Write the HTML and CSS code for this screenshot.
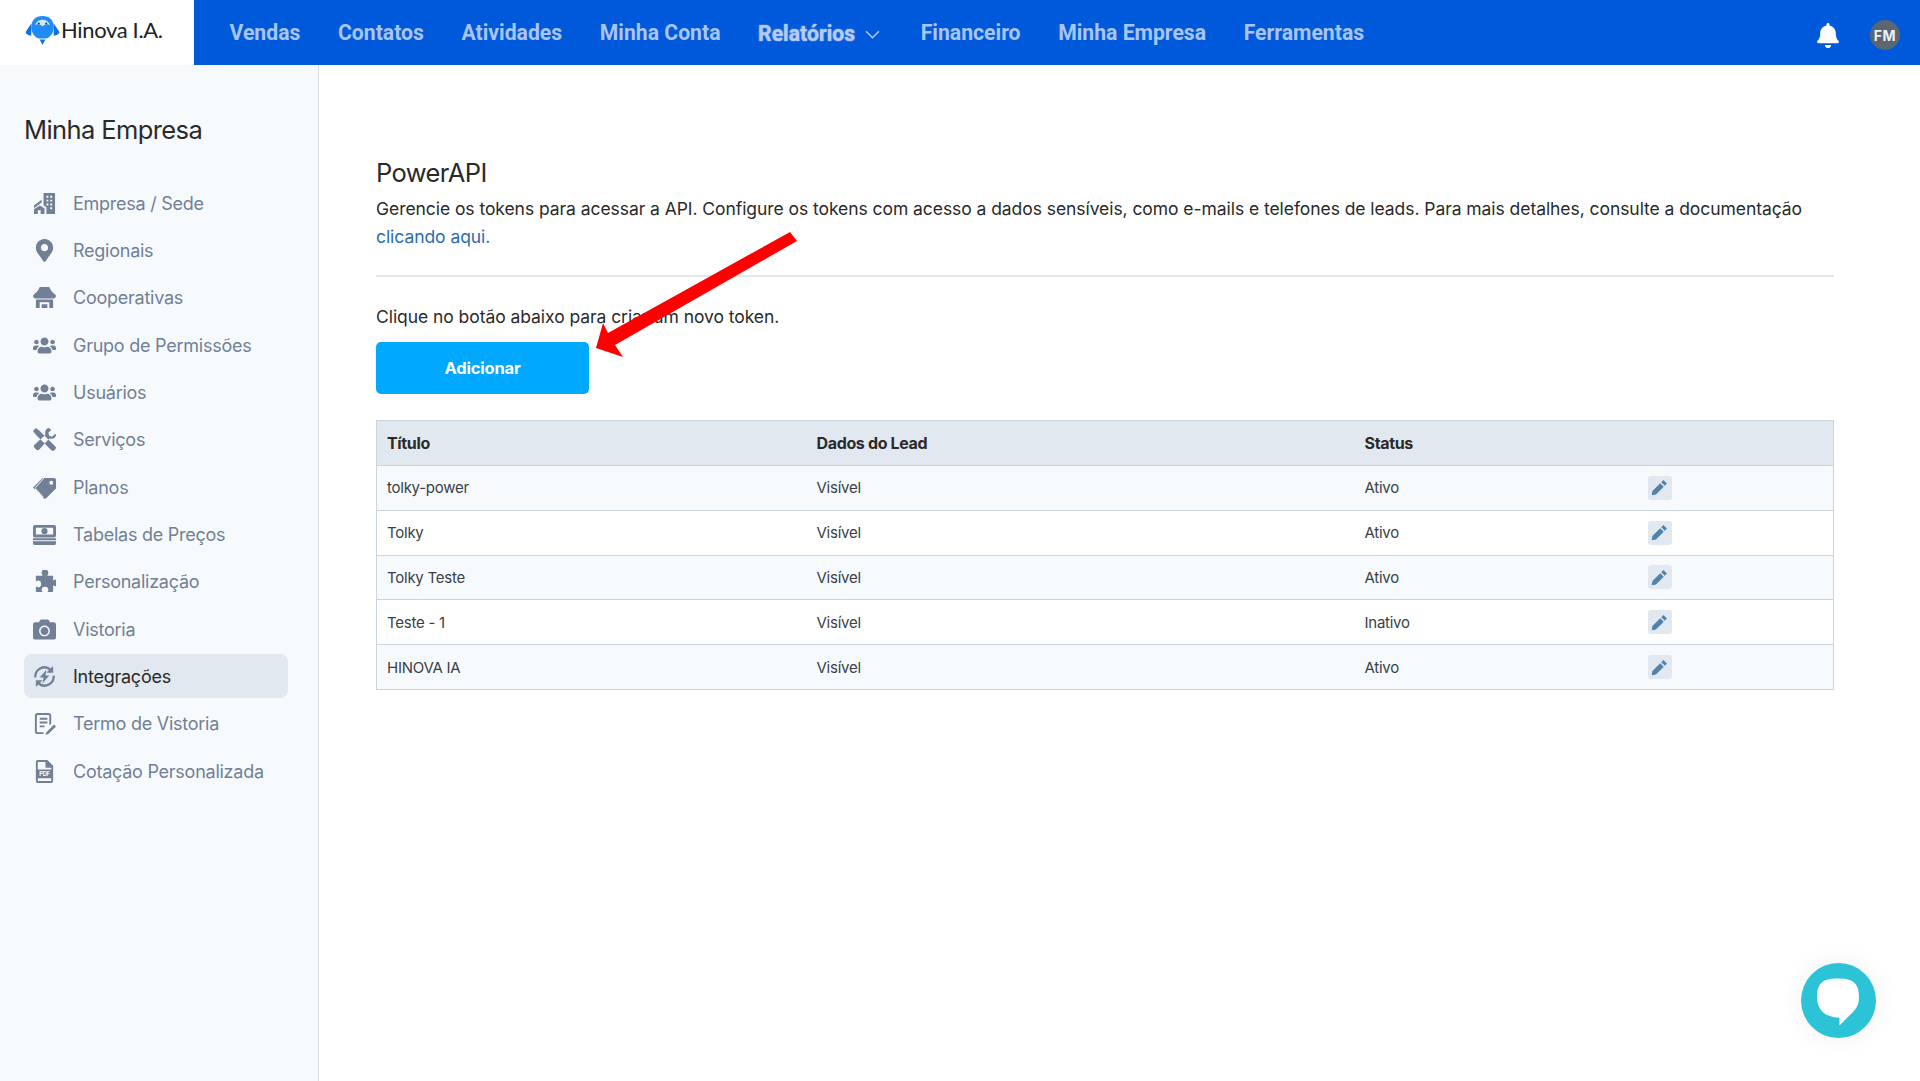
FILE: index.html
```html
<!DOCTYPE html>
<html lang="pt-BR">
<head>
<meta charset="utf-8">
<title>PowerAPI</title>
<link rel="stylesheet" href="styles.css">
</head>
<body>
<svg class="defs" width="0" height="0" aria-hidden="true">
  <symbol id="i-users" viewBox="0 0 640 512"><path d="M96 224c35.3 0 64-28.7 64-64s-28.7-64-64-64-64 28.7-64 64 28.7 64 64 64zm448 0c35.3 0 64-28.7 64-64s-28.7-64-64-64-64 28.7-64 64 28.7 64 64 64zm32 32h-64c-17.6 0-33.5 7.1-45.1 18.6 40.3 22.1 68.9 62 75.1 109.4h66c17.7 0 32-14.3 32-32v-32c0-35.3-28.7-64-64-64zm-256 0c61.9 0 112-50.1 112-112S381.9 32 320 32 208 82.1 208 144s50.1 112 112 112zm76.8 32h-8.3c-20.8 10-43.9 16-68.5 16s-47.6-6-68.5-16h-8.3C179.6 288 128 339.6 128 403.2V432c0 26.5 21.5 48 48 48h288c26.5 0 48-21.5 48-48v-28.8c0-63.6-51.6-115.2-115.2-115.2zm-223.7-13.4C161.5 263.1 145.6 256 128 256H64c-35.3 0-64 28.7-64 64v32c0 17.7 14.3 32 32 32h65.9c6.3-47.4 34.9-87.3 75.2-109.4z"/></symbol>
  <symbol id="i-pencil" viewBox="0 0 24 24"><path d="M17.500 1.500l5 5-3 3-5-5zM13 6l5 5L7 22l-6 1 1-6z"/></symbol>
</svg>

<header class="topbar">
  <a class="brand">
    <svg class="brand-mark" viewBox="0 0 36 32" aria-hidden="true">
      <path d="M6 9 L0 18 Q0 21 6 22 Z" fill="#0f6fe6"/>
      <path d="M30 9 L36 18 Q36 21 30 22 Z" fill="#0f6fe6"/>
      <path d="M18 1C10 1 6 6 6 13c0 6 4 11 8 12h8c4-1 8-6 8-12 0-7-4-12-12-12z" fill="#1f8cf5"/>
      <path d="M10 11c1-4 4-6 8-6s7 2 8 6c-3-2-5-1-8 1-3-2-5-3-8-1z" fill="#cfe6fb"/>
      <circle cx="14" cy="9" r="1" fill="#123"/><circle cx="22" cy="9" r="1" fill="#123"/>
      <path d="M15 26h6l-3 6z" fill="#0f6fe6"/>
    </svg>
    <span class="brand-name">Hinova I.A.</span>
  </a>
  <nav class="mainnav">
    <a>Vendas</a><a>Contatos</a><a>Atividades</a><a>Minha Conta</a>
    <a class="active">Relatórios
      <svg class="chev" viewBox="0 0 14 8" aria-hidden="true"><path d="M1 1l6 6 6-6" fill="none" stroke="currentColor" stroke-width="1.4"/></svg>
    </a>
    <a>Financeiro</a><a>Minha Empresa</a><a>Ferramentas</a>
  </nav>
  <div class="top-actions">
    <svg class="bell" viewBox="0 0 448 512" aria-hidden="true"><path d="M224 512c35.32 0 63.97-28.65 63.97-64H160.03c0 35.35 28.65 64 63.97 64zm215.39-149.71c-19.32-20.76-55.47-51.99-55.47-154.29 0-77.7-54.48-139.9-127.94-155.16V32c0-17.67-14.32-32-31.98-32s-31.98 14.33-31.98 32v20.84C118.56 68.1 64.08 130.3 64.08 208c0 102.3-36.15 133.53-55.47 154.29-6 6.45-8.66 14.16-8.61 21.71.11 16.4 12.98 32 32.1 32h383.8c19.12 0 32-15.6 32.1-32 .05-7.55-2.61-15.27-8.61-21.71z"/></svg>
    <span class="avatar">FM</span>
  </div>
</header>

<div class="shell">
  <aside class="sidebar">
    <h2 class="side-title">Minha Empresa</h2>
    <ul class="side-list">
      <li class="side-item"><svg class="ico" viewBox="0 0 24 24"><path d="M11 1h12v22H14v-7l-3-2zM14 4v2h2V4zm4 0v2h2V4zm-4 4v2h2V8zm4 0v2h2V8zm-4 4v2h2v-2zm4 0v2h2v-2zm0 4v2h2v-2zM1 14l8-6v3l-8 6zM1 18l6-4 5 3v6H8v-4H5v4H1z" fill-rule="evenodd"/></svg>Empresa / Sede</li>
      <li class="side-item"><svg class="ico" viewBox="0 0 384 512"><path d="M172.268 501.67C26.97 291.031 0 269.413 0 192 0 85.961 85.961 0 192 0s192 85.961 192 192c0 77.413-26.97 99.031-172.268 309.67-9.535 13.774-29.93 13.773-39.464 0zM192 272c44.183 0 80-35.817 80-80s-35.817-80-80-80-80 35.817-80 80 35.817 80 80 80z"/></svg>Regionais</li>
      <li class="side-item"><svg class="ico" viewBox="0 0 24 24"><path d="M7 1h10l2 4 5 5c0 2-1 3-3 3H3c-2 0-3-1-3-3l5-5zM3 14h18v9h-4v-6H7v6H3zM9 19h6v4H9z"/></svg>Cooperativas</li>
      <li class="side-item"><svg class="ico" viewBox="0 0 640 512"><use href="#i-users"/></svg>Grupo de Permissões</li>
      <li class="side-item"><svg class="ico" viewBox="0 0 640 512"><use href="#i-users"/></svg>Usuários</li>
      <li class="side-item"><svg class="ico" viewBox="0 0 24 24"><path d="M3 0l4 3 14 14 3 3c0 2-2 4-4 4l-3-3L3 7 0 3zM17 0c-3 0-5 3-4 7L1 18c-1 2 3 6 5 5L17 11c4 1 7-1 7-4l-1-1-3 3-3-1-1-3 3-3z"/></svg>Serviços</li>
      <li class="side-item"><svg class="ico" viewBox="0 0 24 22"><path d="M12 1h10a2 2 0 0 1 2 2v9L14 22a2 2 0 0 1-3 0l-8-8a2 2 0 0 1 0-3zm7 3a2 2 0 1 0 0 4 2 2 0 0 0 0-4zM0 11L10 1h1L2 11l9 10-1 0z" fill-rule="evenodd"/></svg>Planos</li>
      <li class="side-item"><svg class="ico" viewBox="0 0 24 22"><path d="M2 1h20a2 2 0 0 1 2 2v9a2 2 0 0 1-2 2H2a2 2 0 0 1-2-2V3a2 2 0 0 1 2-2zm1 3v7h18V4zM0 15h24v2H0zm0 3h24v2a2 2 0 0 1-2 2H2a2 2 0 0 1-2-2z" fill-rule="evenodd"/><circle cx="12" cy="7.500" r="3.200"/></svg>Tabelas de Preços</li>
      <li class="side-item"><svg class="ico" viewBox="0 0 24 24"><path d="M9 3a3.500 3.500 0 0 1 7 0c0 1-1 2-1 3h6v5c1 0 1-1 2-1a3.500 3.500 0 0 1 0 7c-1 0-1-1-2-1v6a1 1 0 0 1-1 1h-5c0-1 1-1 1-2a3.500 3.500 0 0 0-7 0c0 1 1 1 1 2H4a1 1 0 0 1-1-1v-5c1 0 1 1 2 1a3.500 3.500 0 0 0 0-7c-1 0-1 1-2 1V6h7c0-1-1-2-1-3z"/></svg>Personalização</li>
      <li class="side-item"><svg class="ico" viewBox="0 0 512 512"><path d="M512 144v288c0 26.500-21.500 48-48 48H48c-26.500 0-48-21.500-48-48V144c0-26.500 21.500-48 48-48h88l12.300-32.900c7-18.700 24.900-31.100 45-31.100h125.500c20 0 37.900 12.400 44.900 31.100L376 96h88c26.500 0 48 21.500 48 48zM376 288c0-66.200-53.800-120-120-120s-120 53.800-120 120 53.800 120 120 120 120-53.800 120-120zm-32 0c0 48.500-39.500 88-88 88s-88-39.500-88-88 39.500-88 88-88 88 39.500 88 88z"/></svg>Vistoria</li>
      <li class="side-item is-current"><svg class="ico" viewBox="0 0 24 24"><path class="arc" d="M2.500 13A9.500 9.500 0 0 1 18 4.700M21.500 11A9.500 9.500 0 0 1 6 19.300"/><path d="M21 1v7h-7zM3 23v-7h7zM14 5l-7 8h4l-1 6 7-8h-4z"/></svg>Integrações</li>
      <li class="side-item"><svg class="ico" viewBox="0 0 24 24"><path d="M5 1h11a3 3 0 0 1 3 3v8l-2 2V4a1 1 0 0 0-1-1H5a1 1 0 0 0-1 1v16a1 1 0 0 0 1 1h6v2H5a3 3 0 0 1-3-3V4a3 3 0 0 1 3-3zm2 5h8v2H7zm0 4h8v2H7zm0 4h5v2H7zm15-1l2 2-8 8-3 1 1-3z"/></svg>Termo de Vistoria</li>
      <li class="side-item"><svg class="ico" viewBox="0 0 24 24"><path d="M5 0h10l6 6v16a2 2 0 0 1-2 2H5a2 2 0 0 1-2-2V2a2 2 0 0 1 2-2zm0 2v8h14V8h-6V2zm0 17v3h14v-3z" fill-rule="evenodd"/><text class="pdf" x="12" y="16.700" text-anchor="middle">PDF</text></svg>Cotação Personalizada</li>
    </ul>
  </aside>

  <main class="content">
    <h1 class="page-title">PowerAPI</h1>
    <p class="lead">Gerencie os tokens para acessar a API. Configure os tokens com acesso a dados sensíveis, como e-mails e telefones de leads. Para mais detalhes, consulte a documentação <a class="link">clicando aqui.</a></p>
    <hr class="rule">
    <p class="hint">Clique no botão abaixo para criar um novo token.</p>
    <button class="btn-add" type="button">Adicionar</button>
    <table class="tokens">
      <thead>
        <tr><th class="col-a">Título</th><th class="col-b">Dados do Lead</th><th class="col-c">Status</th><th></th></tr>
      </thead>
      <tbody>
        <tr><td>tolky-power</td><td>Visível</td><td>Ativo</td><td><span class="edit"><svg viewBox="0 0 24 24"><use href="#i-pencil"/></svg></span></td></tr>
        <tr><td>Tolky</td><td>Visível</td><td>Ativo</td><td><span class="edit"><svg viewBox="0 0 24 24"><use href="#i-pencil"/></svg></span></td></tr>
        <tr><td>Tolky Teste</td><td>Visível</td><td>Ativo</td><td><span class="edit"><svg viewBox="0 0 24 24"><use href="#i-pencil"/></svg></span></td></tr>
        <tr><td>Teste - 1</td><td>Visível</td><td>Inativo</td><td><span class="edit"><svg viewBox="0 0 24 24"><use href="#i-pencil"/></svg></span></td></tr>
        <tr><td>HINOVA IA</td><td>Visível</td><td>Ativo</td><td><span class="edit"><svg viewBox="0 0 24 24"><use href="#i-pencil"/></svg></span></td></tr>
      </tbody>
    </table>
  </main>
</div>

<svg class="arrow" viewBox="0 0 204 130" aria-hidden="true"><path d="M195 2L202 11 20 115 28 127 1 118 8 93 13 103Z"/></svg>

<div class="chat">
  <svg viewBox="0 0 44 48" aria-hidden="true"><path d="M21 0c14 0 22 3 22 19 0 9-4 14-10 19L23 48v-8C8 40 0 32 0 19 0 3 8 0 21 0z"/></svg>
</div>
</body>
</html>
```
FILE: styles.css
```css
* { box-sizing: border-box; }
html, body { margin: 0; height: 100%; }
body { font-family: Inter, "Liberation Sans", sans-serif; color: #2a2a2a; background: #fff; overflow: hidden; }
.defs { position: absolute; }

.topbar { display: flex; align-items: center; height: 65px; background: #0058db; }
.brand { display: flex; align-items: center; gap: 0; width: 194px; height: 65px; padding: 0 0 6px 24px; background: #fff; }
.brand-mark { width: 37px; height: 30px; }
.brand-name { font-family: Lato, sans-serif; font-size: 22px; color: #222; letter-spacing: -.35px; }
.mainnav { display: flex; align-items: center; gap: 37.600px; margin-left: 35.500px; padding-bottom: 1px; font-family: Roboto, sans-serif; font-weight: 700; font-size: 21.200px; color: #a9c5f3; }
.mainnav a { display: flex; align-items: center; gap: 10px; white-space: nowrap; }
.mainnav .active { color: #b4ccf5; text-shadow: 0 0 1.500px #b4ccf5; padding-top: 2px; }
.chev { width: 15px; height: 9px; margin: 2px 3px 0 0; }
.top-actions { display: flex; align-items: center; gap: 31px; margin-left: auto; padding-right: 20px; }
.bell { width: 22px; height: 25px; fill: #fff; margin-top: 5px; }
.avatar { display: flex; align-items: center; justify-content: center; width: 30px; height: 30px; border-radius: 50%; background: #5a6672; color: #eef1f4; font-size: 14px; font-weight: 700; margin-top: 5px; letter-spacing: .6px; }

.shell { display: flex; height: 1016px; }
.sidebar { width: 319px; flex: none; padding: 48px 30px 0 24px; background: #f7fafc; border-right: 1px solid #d5dde5; }
.side-title { margin: 0 0 34px; font-size: 25.500px; line-height: 34px; font-weight: 400; color: #2a2a2a; letter-spacing: -.6px; }
.side-list { display: flex; flex-direction: column; gap: 3.350px; margin: 0; padding: 0; list-style: none; }
.side-item { display: flex; align-items: center; gap: 17px; height: 44px; padding: 0 9px; border-radius: 8px; font-size: 18px; color: #718096; white-space: nowrap; letter-spacing: -.25px; }
.side-item .ico { width: 23px; height: 23px; flex: none; fill: #718096; }
.is-current { background: #e2e8f0; color: #2a2a2a; }
.arc { fill: none; stroke: #718096; stroke-width: 2.400; }
.pdf { font-size: 6px; font-weight: 700; fill: #f7fafc; }

.content { flex: 1; padding: 91px 86px 0 57px; }
.page-title { margin: 0; font-size: 25.500px; line-height: 34px; font-weight: 400; color: #2a2a2a; letter-spacing: -.6px; }
.lead { margin: 4.500px 0 0; font-size: 17.500px; line-height: 28px; color: #2a2a2a; letter-spacing: -.06px; }
.link { color: #2b6cb0; }
.rule { margin: 24px 0 0; border: 0; border-top: 2px solid #e2e8f0; }
.hint { margin: 26px 0 0; font-size: 17.500px; line-height: 28px; letter-spacing: -.06px; }
.btn-add { display: block; width: 213px; height: 52px; margin-top: 11.500px; border: 0; border-radius: 5px; background: #00a8ff; color: #fff; font-family: inherit; font-size: 16.500px; font-weight: 700; letter-spacing: -.2px; }

.tokens { width: 100%; margin-top: 26px; border-collapse: collapse; table-layout: fixed; font-size: 15px; border: 1px solid #cbd5e0; }
.tokens th { height: 45px; padding: 0 10px; text-align: left; font-weight: 700; background: #e2e8f0; font-size: 16px; border-bottom: 1px solid #cbd5e0; letter-spacing: -.35px; }
.tokens td { height: 44.800px; padding: 0 10px; border-bottom: 1px solid #cbd5e0; letter-spacing: -.25px; color: #3a3f47; }
.tokens tbody tr:nth-child(odd) { background: #f7fafc; }
.col-a { width: 430px; }
.col-b { width: 548px; }
.col-c { width: 283px; }
.edit { display: flex; align-items: center; justify-content: center; width: 24px; height: 24px; border-radius: 3px; background: #e2e8f0; }
.edit svg { width: 17px; height: 17px; fill: #4f83ad; }

.arrow { position: absolute; left: 595px; top: 230px; width: 204px; height: 130px; fill: #ff0000; }
.chat { position: absolute; left: 1801px; top: 963px; display: flex; align-items: center; justify-content: center; width: 75px; height: 75px; border-radius: 50%; background: #2dc3d6; box-shadow: 0 0 30px rgba(0,0,0,.06); }
.chat svg { width: 43px; height: 48px; margin-top: 2px; fill: #fff; }
```
